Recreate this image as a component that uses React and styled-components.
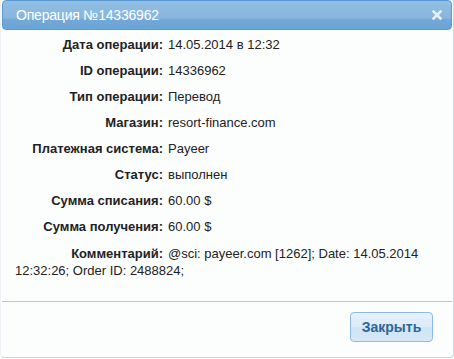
import React from 'react';
import styled, { createGlobalStyle } from 'styled-components';

const GlobalStyle = createGlobalStyle`
  html, body {
    margin: 0;
    padding: 0;
    background: #ffffff;
  }
  body {
    font-family: "Liberation Sans", Arial, sans-serif;
  }
`;

const Dialog = styled.div`
  width: 454px;
  box-sizing: border-box;
  border: 1px solid #c9d9e7;
  border-top: none;
  border-left-color: #eef3f8;
  border-radius: 0 0 4px 4px;
  padding: 0 1px 2px 1px;
  background: #fcfdfd;
`;

const TitleBar = styled.div`
  height: 28px;
  display: flex;
  align-items: center;
  justify-content: space-between;
  padding: 0 9px 0 13px;
  border: 1px solid #5b9bd1;
  border-radius: 4px;
  background: linear-gradient(to bottom, #93bee3 0%, #86b5de 62%, #74a9d9 64%, #6aa3d6 100%);
`;

const Title = styled.span`
  color: #ffffff;
  font-size: 14px;
  letter-spacing: -0.2px;
`;

const CloseButton = styled.span`
  display: flex;
  width: 10px;
  height: 10px;
  cursor: pointer;
`;

const Content = styled.div`
  padding: 2px 13px 16px 13px;
  height: 253px;
  color: #222222;
  font-size: 13px;
`;

const Row = styled.div`
  padding: 5px 0;
  line-height: ${({ $lh }) => $lh || 16}px;
  white-space: ${({ $wrap }) => ($wrap ? 'normal' : 'nowrap')};
`;

const Label = styled.span`
  display: inline-block;
  width: 148px;
  margin-right: 5px;
  text-align: right;
  font-weight: bold;
`;

const Footer = styled.div`
  display: flex;
  justify-content: flex-end;
  border-top: 1px solid #a9cbe5;
  padding: 10px 19px 13px 0;
`;

const Button = styled.button`
  width: 83px;
  height: 30px;
  border: 1px solid #8dbbe4;
  border-radius: 4px;
  background: linear-gradient(to bottom, #e6f1fb 0%, #dcebf8 50%, #d0e4f5 52%, #d6e8f7 100%);
  color: #2c6696;
  font-family: "Liberation Sans", Arial, sans-serif;
  font-size: 14px;
  font-weight: bold;
  padding: 0;
  cursor: pointer;
`;

const rows = [
  ['Дата операции:', '14.05.2014 в 12:32'],
  ['ID операции:', '14336962'],
  ['Тип операции:', 'Перевод'],
  ['Магазин:', 'resort-finance.com'],
  ['Платежная система:', 'Payeer'],
  ['Статус:', 'выполнен'],
  ['Сумма списания:', '60.00 $'],
  ['Сумма получения:', '60.00 $'],
];

const CloseIcon = () => (
  <svg width="10" height="10" viewBox="0 0 10 10">
    <path d="M1.5 1.5 L8.5 8.5 M8.5 1.5 L1.5 8.5" stroke="#e6eff8" strokeWidth="2.6" strokeLinecap="square" />
  </svg>
);

export default function App() {
  return (
    <>
      <GlobalStyle />
      <Dialog>
        <TitleBar>
          <Title>Операция №14336962</Title>
          <CloseButton><CloseIcon /></CloseButton>
        </TitleBar>
        <Content>
          {rows.map(([label, value]) => (
            <Row key={label}>
              <Label>{label}</Label>
              {value}
            </Row>
          ))}
          <Row $wrap $lh={17}>
            <Label>Комментарий:</Label>
            @sci: payeer.com [1262]; Date: 14.05.2014 12:32:26; Order ID: 2488824;
          </Row>
        </Content>
        <Footer>
          <Button>Закрыть</Button>
        </Footer>
      </Dialog>
    </>
  );
}
